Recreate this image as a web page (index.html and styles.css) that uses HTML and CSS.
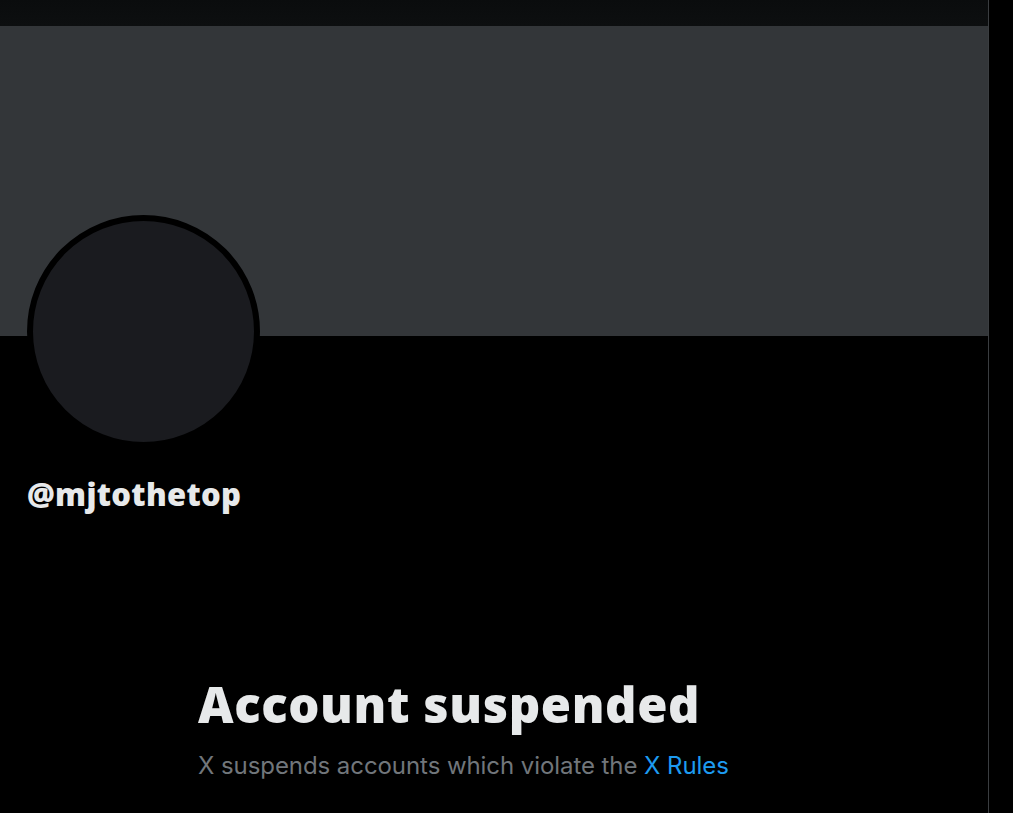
FILE: index.html
```html
<!DOCTYPE html>
<html lang="en">
<head>
<meta charset="utf-8">
<title>@mjtothetop / X</title>
<link rel="stylesheet" href="styles.css">
</head>
<body>
<div class="layout">
  <main class="column">
    <div class="topbar"></div>
    <div class="banner"></div>
    <div class="profile">
      <div class="avatar"></div>
      <div class="handle">@mjtothetop</div>
    </div>
    <section class="suspended">
      <h1 class="suspended-title">Account suspended</h1>
      <p class="suspended-text">X suspends accounts which violate the <a class="rules-link" href="#">X Rules</a></p>
    </section>
  </main>
</div>
</body>
</html>
```
FILE: styles.css
```css
html, body {
  margin: 0;
  padding: 0;
  background: #000;
  height: 100%;
}
body {
  font-family: Inter, "Open Sans", "Liberation Sans", sans-serif;
  color: #e7e9ea;
  overflow: hidden;
}
.layout {
  display: flex;
  height: 100%;
}
.column {
  width: 988px;
  flex: none;
  border-right: 1px solid #3a3d40;
  display: flex;
  flex-direction: column;
}
.topbar {
  height: 26px;
  background: linear-gradient(#0a0c0d, #0d0f10);
}
.banner {
  height: 310px;
  background: #333639;
}
.profile {
  padding-left: 27px;
  display: flex;
  flex-direction: column;
  align-items: flex-start;
}
.avatar {
  width: 221px;
  height: 221px;
  border: 6px solid #000;
  border-radius: 50%;
  background: #1a1b1f;
  margin-top: -121px;
}
.handle {
  margin-top: 28px;
  font-family: "Open Sans", Inter, sans-serif;
  font-size: 31px;
  font-weight: 800;
  line-height: 36px;
  letter-spacing: 0.3px;
}
.suspended {
  padding-left: 198px;
  padding-top: 163px;
}
.suspended-title {
  margin: 0;
  font-family: "Open Sans", Inter, sans-serif;
  font-size: 49px;
  font-weight: 800;
  line-height: 58px;
  letter-spacing: 0.6px;
}
.suspended-text {
  margin: 16px 0 0;
  font-size: 24px;
  line-height: 34px;
  letter-spacing: -0.07px;
  color: #71767b;
}
.rules-link {
  color: #1d9bf0;
  text-decoration: none;
}
```
